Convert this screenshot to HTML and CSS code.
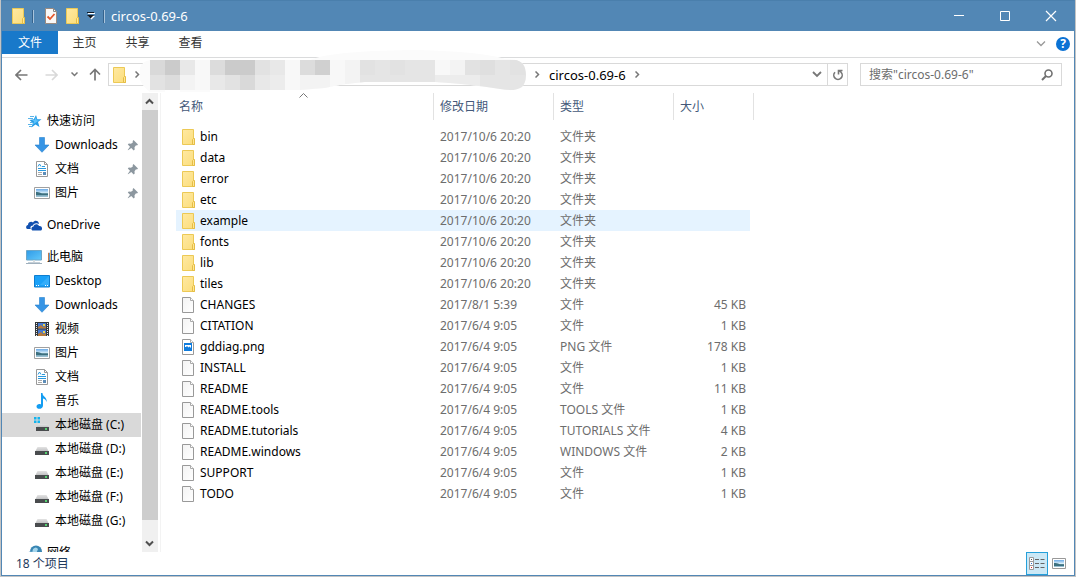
FILE: index.html
```html
<!DOCTYPE html>
<html lang="zh-CN">
<head>
<meta charset="utf-8">
<title>circos-0.69-6</title>
<link rel="stylesheet" href="styles.css">
</head>
<body>
<svg class="defs" aria-hidden="true">
  <defs>
    <linearGradient id="gFolder" x1="0" y1="0" x2="1" y2="1"><stop offset="0" stop-color="#ffe9a2"/><stop offset="1" stop-color="#fbdd7b"/></linearGradient>
    <linearGradient id="gBlue" x1="0" y1="0" x2="1" y2="1"><stop offset="0" stop-color="#2f9be8"/><stop offset="1" stop-color="#62c8fa"/></linearGradient>
    <linearGradient id="gSky" x1="0" y1="0" x2="0" y2="1"><stop offset="0" stop-color="#6aa9e6"/><stop offset=".5" stop-color="#d9effa"/><stop offset=".6" stop-color="#5d8f9b"/><stop offset="1" stop-color="#a3c8dc"/></linearGradient>
    <linearGradient id="gDisk" x1="0" y1="0" x2="0" y2="1"><stop offset="0" stop-color="#e3e3e3"/><stop offset="1" stop-color="#b9babc"/></linearGradient>
    <linearGradient id="gPage" x1="0" y1="0" x2="1" y2="1"><stop offset="0" stop-color="#f3f3f3"/><stop offset="1" stop-color="#ffffff"/></linearGradient>
    <symbol id="folder" viewBox="0 0 16 18"><path d="M1.500 1.500h11v10h1v5h-12z" fill="url(#gFolder)" stroke="#ecc955"/><path d="M11.500 16.500v-5l1-1h1v6z" fill="#ffe694" stroke="#e5bd45"/></symbol>
    <symbol id="file" viewBox="0 0 16 18"><path d="M1.500 1.500h8l3 3v12h-11z" fill="url(#gPage)" stroke="#999"/><path d="M9.500 1.500v3h3" fill="#fff" stroke="#aaa"/></symbol>
    <symbol id="png" viewBox="0 0 16 18"><path d="M1.500 1.500h8l3 3v12h-11z" fill="#fff" stroke="#999"/><path d="M9.500 1.500v3h3" fill="#fff" stroke="#aaa"/><path d="M3 5h8v8H3z" fill="#0f7cdd"/><path d="M4 7h6v3L8.500 8.500l-1 1L6 8 5 9H4z" fill="#fff"/></symbol>
    <symbol id="star" viewBox="0 0 16 16"><path d="M10 2l1.300 4.300H15.500L12 9l1.500 5-4-2.500L5.500 14.500 6.800 10 3.500 7l4.300-.7z" fill="#249ce6"/><path d="M10 4l.7 3.300L13 7.500 10 9.500l-3 2 1-3-2-1.200 2.500-.3z" fill="#5bc2fb"/><path d="M4 3.500h4M2 5.500h5M4 9.500h3M2 11.500h4M3 13.500h3" stroke="#58b4ea"/></symbol>
    <symbol id="down" viewBox="0 0 16 16"><path d="M5.500.5h5v7.500H15L8 15.300 1 8h4.500z" fill="#3795e5" stroke="#2582ce" stroke-width=".6"/></symbol>
    <symbol id="doc" viewBox="0 0 16 16"><path d="M2.500.5h8l3 3v12h-11z" fill="#fff" stroke="#999"/><path d="M10.500.5v3h3" fill="none" stroke="#999"/><path d="M4 5.500L5.500 3 7 5.500M8 5.500h3M4 7.500h8M4 9.500h8" fill="none" stroke="#2b9ade"/><path d="M4 11.500h4M4 13.500h4" stroke="#aaa"/><path d="M9 11h3v3H9z" fill="#5d8db8"/></symbol>
    <symbol id="pic" viewBox="0 0 16 16"><path d="M.5 2.500h15v11H.5z" fill="#fff" stroke="#a0a0a0"/><path d="M2 4h12v8H2z" fill="url(#gSky)"/><path d="M2 7q3-.5 6 1.500h6V10H2z" fill="#3c7080"/></symbol>
    <symbol id="cloud" viewBox="0 0 16 16"><path d="M1.500 12C-.5 12-.3 8 2 8c0-3 3.500-4 5-2.500C8.500 2.500 13 3.500 13 7c-3-2-6 0-6 1.500-3 0-3 3-2 3.500z" fill="#1150b0"/><path d="M7 13.500c-2 0-2.300-3.700.5-4 .5-3 4.500-3 5.500-.5C16 8.500 17 12 15 13.500z" fill="#1150b0"/></symbol>
    <symbol id="pc" viewBox="0 0 16 16"><path d="M.5 1.500h15v9.500H.5z" fill="url(#gBlue)" stroke="#6ba6c8"/><path d="M7 11h2v2H7z" fill="#d5dbde"/><path d="M2 13.500h12" stroke="#c5d0d8"/><path d="M0 14.500h16" stroke="#9fb0bd"/></symbol>
    <symbol id="desk" viewBox="0 0 16 16"><path d="M.5 2.500h15v11.500H.5z" fill="#1aa1f8" stroke="#0e7ed0"/><path d="M6 12L15 3v9z" fill="#33adfa"/><path d="M2 12.500h12" stroke="#fff" stroke-dasharray="1 1 1 6 1 1"/></symbol>
    <symbol id="film" viewBox="0 0 16 16"><path d="M1 1h14v14H1z" fill="#34383c"/><path d="M4 2h8v5.500H4zM4 8.500h8V15H4z" fill="#4779d0"/><path d="M4 6l3-2 2 2 3-1v2.500H4zM4 13l3-2 2 2 3-1v3H4z" fill="#b57a3c"/><path d="M9 3h2v2H9zM9 10h2v2H9z" fill="#ecd34b"/><path d="M2.500 2v13M13.500 2v13" stroke="#eee" stroke-dasharray="1 1"/></symbol>
    <symbol id="music" viewBox="0 0 16 16"><path d="M7 0h1.500c0 4 5 4 4 9-.7-3-2.500-3.500-3.500-3.500v7c0 4-6.500 4.500-6.500 1 0-2 2.500-3 4.500-2z" fill="#139df2"/></symbol>
    <symbol id="disk" viewBox="0 0 16 16"><path d="M3.500 6h9L15 11H1z" fill="url(#gDisk)"/><path d="M1 10h14v4H1z" fill="#494c4e"/><path d="M11 11h2v2h-2z" fill="#54d070"/></symbol>
    <symbol id="diskc" viewBox="0 0 16 16"><path d="M4.500 7h8.500l2.500 4H2z" fill="url(#gDisk)"/><path d="M2 10h13v4H2z" fill="#494c4e"/><path d="M11 11h2v2h-2z" fill="#54d070"/><path d="M0 0h2.500v2.500H0zM3.500 0H6v2.500H3.500zM0 3.500h2.500V6H0zM3.500 3.500H6V6H3.500z" fill="#12b4ee"/></symbol>
    <symbol id="net" viewBox="0 0 16 16"><circle cx="10" cy="6.500" r="6" fill="#3986b3"/><path d="M7 4q3-3 5 0l-2 5-4-1z" fill="#a5d5eb"/><path d="M0 8l5-2 4 3v6H0z" fill="#6aa6c7"/></symbol>
    <symbol id="pin" viewBox="0 0 12 12"><path d="M6.500 1L11 5.500 10 6.500l-1-.3-1.500 2 .2 2.300-1 1L4.300 9 1 11.300.7 11 3 7.700.8 5.500l1-1 2.200.2 2-1.500-.4-1z" fill="#8c979f"/></symbol>
  </defs>
</svg>
<main class="window">
  <header class="titlebar">
    <svg class="ic tall"><use href="#folder"/></svg>
    <span class="bar"></span>
    <button class="plain quick" aria-label="属性"><svg width="14" height="17" viewBox="0 0 14 17"><path d="M1.500.5h8l3 3v12h-11z" fill="#f8f8f8" stroke="#9b8b80"/><path d="M9.500.5v3h3" fill="none" stroke="#888"/><path d="M3.500 8.500l2.500 2.500L10.500 6" fill="none" stroke="#e3572b" stroke-width="1.800"/></svg></button>
    <button class="plain quick" aria-label="新建文件夹"><svg class="ic tall"><use href="#folder"/></svg></button>
    <button class="plain more" aria-label="自定义"><svg width="8" height="8" viewBox="0 0 8 8"><path d="M0 .5h7" stroke="#101c28"/><path d="M1 1.500h7" stroke="#fff"/><path d="M1 4h7L4.500 7.500z" fill="#fff"/><path d="M0 3h7L3.500 6.500z" fill="#101820"/></svg></button>
    <span class="bar"></span>
    <h1>circos-0.69-6</h1>
    <div class="controls">
      <button class="plain" aria-label="最小化"><svg width="12" height="12"><path d="M1 5.500h10" stroke="#fff"/></svg></button>
      <button class="plain" aria-label="最大化"><svg width="12" height="12"><path d="M1.500 1.500h9v9h-9z" fill="none" stroke="#fff"/></svg></button>
      <button class="plain" aria-label="关闭"><svg width="12" height="12"><path d="M1 1l10 10M11 1L1 11" stroke="#fff" stroke-width="1.200"/></svg></button>
    </div>
  </header>
  <nav class="ribbon">
    <button class="plain tab file-tab">文件</button>
    <button class="plain tab">主页</button>
    <button class="plain tab">共享</button>
    <button class="plain tab">查看</button>
    <div class="ribbon-end">
      <button class="plain" aria-label="展开功能区"><svg width="10" height="6"><path d="M1 .5l4 4 4-4" fill="none" stroke="#999" stroke-width="1.300"/></svg></button>
      <button class="plain help" aria-label="帮助">?</button>
    </div>
  </nav>
  <div class="toolbar">
    <button class="plain arrow" aria-label="后退"><svg width="13" height="12"><path d="M12.500 6H1.500M6 1L1 6l5 5" fill="none" stroke="#777" stroke-width="1.700"/></svg></button>
    <button class="plain arrow fwd" aria-label="前进"><svg width="13" height="12"><path d="M.5 6h11M7 1l5 5-5 5" fill="none" stroke="#d9d9d9" stroke-width="1.700"/></svg></button>
    <button class="plain recent" aria-label="最近"><svg width="7" height="5"><path d="M.5.5l3 3 3-3" fill="none" stroke="#777" stroke-width="1.500"/></svg></button>
    <button class="plain up" aria-label="上移"><svg width="12" height="13"><path d="M6 12.500V1.500M1 6.500L6 1.500l5 5" fill="none" stroke="#777" stroke-width="1.700"/></svg></button>
    <div class="address">
      <svg class="ic tall"><use href="#folder"/></svg>
      <svg class="sep" width="5" height="7"><path d="M.5.5l3 3-3 3" fill="none" stroke="#777" stroke-width="1.500"/></svg>
      <div class="crumbs">
        <svg width="5" height="7"><path d="M.5.5l3 3-3 3" fill="none" stroke="#777" stroke-width="1.500"/></svg>
        <a class="crumb" href="#">circos-0.69-6</a>
        <svg width="5" height="7"><path d="M.5.5l3 3-3 3" fill="none" stroke="#777" stroke-width="1.500"/></svg>
      </div>
      <button class="plain drop" aria-label="历史"><svg width="10" height="7"><path d="M1 1l4 4 4-4" fill="none" stroke="#777" stroke-width="1.800"/></svg></button>
      <button class="plain refresh" aria-label="刷新"><svg width="12" height="12"><path d="M3 3.200a4.200 4.200 0 1 0 6 0L7 1.500M6.500 5.500v-4h4" fill="none" stroke="#777" stroke-width="1.600"/></svg></button>
      <svg class="mosaic" width="386" height="44" viewBox="140 49 386 44" shape-rendering="crispEdges" aria-hidden="true">
        <clipPath id="blob"><path d="M150 60h376v30H150z"/></clipPath>
        <clipPath id="edge"><path d="M140 60h10l160 0Q330 51 410 50Q480 51 505 59Q522 58 525 68Q528 80 522 87Q515 92 500 89Q470 84 435 82H365Q340 84 325 88L300 90H210V92H180V90H165V92H150Q139 84 139 74Q139 62 150 60z"/></clipPath>
        <g clip-path="url(#edge)">
          <path d="M138 49h390v46H138z" fill="#fbfbfb"/>
          <g clip-path="url(#blob)">
          <path fill="#d9d9d9" d="M150 60h15v15h-15zM240 75h15v15h-15z"/>
          <path fill="#cbcbcb" d="M165 60h15v15h-15zM225 60h30v15h-30z"/>
          <path fill="#e8e8e8" d="M180 60h15v15h-15zM210 75h15v15h-15zM270 60h15v15h-15zM255 75h15v15h-15z"/>
          <path fill="#f8f8f8" d="M195 60h15v30h-15zM285 60h15v30h-15zM330 60h15v30h-15zM435 60h15v15h-15z"/>
          <path fill="#dcdcdc" d="M210 60h15v15h-15zM165 75h15v15h-15zM300 60h15v15h-15z"/>
          <path fill="#e2e2e2" d="M150 75h15v15h-15zM225 75h15v15h-15zM255 60h15v15h-15zM360 60h15v15h-15zM390 60h15v15h-15zM465 60h15v15h-15zM510 60h16v15h-16z"/>
          <path fill="#d0d0d0" d="M315 60h15v15h-15z"/>
          <path fill="#f3f3f3" d="M180 75h15v15h-15zM300 75h30v15h-30zM345 60h15v30h-15zM450 60h15v15h-15z"/>
          <path fill="#ececec" d="M270 75h15v15h-15zM435 75h45v15h-45z"/>
          <path fill="#e5e5e5" d="M360 75h75v15h-75zM375 60h15v15h-15zM405 60h30v15h-30zM480 75h46v15h-46zM495 60h15v15h-15z"/>
          <path fill="#dfdfdf" d="M480 60h15v15h-15z"/>
          </g>
        </g>
      </svg>
    </div>
    <label class="search"><input type="text" placeholder="搜索&quot;circos-0.69-6&quot;" aria-label="搜索"><svg width="12" height="12"><circle cx="7.500" cy="4.500" r="3.500" fill="none" stroke="#707070" stroke-width="1.600"/><path d="M5 7L1 11" stroke="#707070" stroke-width="2"/></svg></label>
  </div>
  <div class="body">
    <nav class="sidebar">
      <ul class="tree">
        <li><a class="node top" href="#"><svg class="ic"><use href="#star"/></svg>快速访问</a></li>
        <li><a class="node" href="#"><svg class="ic"><use href="#down"/></svg>Downloads<svg class="pin"><use href="#pin"/></svg></a></li>
        <li><a class="node" href="#"><svg class="ic"><use href="#doc"/></svg>文档<svg class="pin"><use href="#pin"/></svg></a></li>
        <li><a class="node" href="#"><svg class="ic"><use href="#pic"/></svg>图片<svg class="pin"><use href="#pin"/></svg></a></li>
      </ul>
      <ul class="tree">
        <li><a class="node top" href="#"><svg class="ic"><use href="#cloud"/></svg>OneDrive</a></li>
      </ul>
      <ul class="tree">
        <li><a class="node top" href="#"><svg class="ic"><use href="#pc"/></svg>此电脑</a></li>
        <li><a class="node" href="#"><svg class="ic"><use href="#desk"/></svg>Desktop</a></li>
        <li><a class="node" href="#"><svg class="ic"><use href="#down"/></svg>Downloads</a></li>
        <li><a class="node" href="#"><svg class="ic"><use href="#film"/></svg>视频</a></li>
        <li><a class="node" href="#"><svg class="ic"><use href="#pic"/></svg>图片</a></li>
        <li><a class="node" href="#"><svg class="ic"><use href="#doc"/></svg>文档</a></li>
        <li><a class="node" href="#"><svg class="ic"><use href="#music"/></svg>音乐</a></li>
        <li><a class="node selected" href="#"><svg class="ic"><use href="#diskc"/></svg>本地磁盘 (C:)</a></li>
        <li><a class="node" href="#"><svg class="ic"><use href="#disk"/></svg>本地磁盘 (D:)</a></li>
        <li><a class="node" href="#"><svg class="ic"><use href="#disk"/></svg>本地磁盘 (E:)</a></li>
        <li><a class="node" href="#"><svg class="ic"><use href="#disk"/></svg>本地磁盘 (F:)</a></li>
        <li><a class="node" href="#"><svg class="ic"><use href="#disk"/></svg>本地磁盘 (G:)</a></li>
      </ul>
      <ul class="tree">
        <li><a class="node top" href="#"><svg class="ic"><use href="#net"/></svg>网络</a></li>
      </ul>
    </nav>
    <div class="scroll">
      <button class="plain" aria-label="向上滚动"><svg width="10" height="7"><path d="M1 5.500l3.500-3.500L8 5.500" fill="none" stroke="#505050" stroke-width="2"/></svg></button>
      <div class="thumb"></div>
      <button class="plain" aria-label="向下滚动"><svg width="10" height="7"><path d="M1 1.500L4.500 5 8 1.500" fill="none" stroke="#505050" stroke-width="2"/></svg></button>
    </div>
    <section class="files">
      <table>
        <colgroup><col class="c-name"><col class="c-date"><col class="c-type"><col class="c-size"></colgroup>
        <thead><tr><th>名称<svg class="sort" width="9" height="5"><path d="M.5 4.500l4-4 4 4" fill="none" stroke="#777"/></svg></th><th>修改日期</th><th>类型</th><th>大小</th></tr></thead>
        <tbody>
          <tr><td><span class="name"><svg class="ic tall"><use href="#folder"/></svg>bin</span></td><td>2017/10/6 20:20</td><td>文件夹</td><td></td></tr>
          <tr><td><span class="name"><svg class="ic tall"><use href="#folder"/></svg>data</span></td><td>2017/10/6 20:20</td><td>文件夹</td><td></td></tr>
          <tr><td><span class="name"><svg class="ic tall"><use href="#folder"/></svg>error</span></td><td>2017/10/6 20:20</td><td>文件夹</td><td></td></tr>
          <tr><td><span class="name"><svg class="ic tall"><use href="#folder"/></svg>etc</span></td><td>2017/10/6 20:20</td><td>文件夹</td><td></td></tr>
          <tr class="hover"><td><span class="name"><svg class="ic tall"><use href="#folder"/></svg>example</span></td><td>2017/10/6 20:20</td><td>文件夹</td><td></td></tr>
          <tr><td><span class="name"><svg class="ic tall"><use href="#folder"/></svg>fonts</span></td><td>2017/10/6 20:20</td><td>文件夹</td><td></td></tr>
          <tr><td><span class="name"><svg class="ic tall"><use href="#folder"/></svg>lib</span></td><td>2017/10/6 20:20</td><td>文件夹</td><td></td></tr>
          <tr><td><span class="name"><svg class="ic tall"><use href="#folder"/></svg>tiles</span></td><td>2017/10/6 20:20</td><td>文件夹</td><td></td></tr>
          <tr><td><span class="name"><svg class="ic tall"><use href="#file"/></svg>CHANGES</span></td><td>2017/8/1 5:39</td><td>文件</td><td>45 KB</td></tr>
          <tr><td><span class="name"><svg class="ic tall"><use href="#file"/></svg>CITATION</span></td><td>2017/6/4 9:05</td><td>文件</td><td>1 KB</td></tr>
          <tr><td><span class="name"><svg class="ic tall"><use href="#png"/></svg>gddiag.png</span></td><td>2017/6/4 9:05</td><td>PNG 文件</td><td>178 KB</td></tr>
          <tr><td><span class="name"><svg class="ic tall"><use href="#file"/></svg>INSTALL</span></td><td>2017/6/4 9:05</td><td>文件</td><td>1 KB</td></tr>
          <tr><td><span class="name"><svg class="ic tall"><use href="#file"/></svg>README</span></td><td>2017/6/4 9:05</td><td>文件</td><td>11 KB</td></tr>
          <tr><td><span class="name"><svg class="ic tall"><use href="#file"/></svg>README.tools</span></td><td>2017/6/4 9:05</td><td>TOOLS 文件</td><td>1 KB</td></tr>
          <tr><td><span class="name"><svg class="ic tall"><use href="#file"/></svg>README.tutorials</span></td><td>2017/6/4 9:05</td><td>TUTORIALS 文件</td><td>4 KB</td></tr>
          <tr><td><span class="name"><svg class="ic tall"><use href="#file"/></svg>README.windows</span></td><td>2017/6/4 9:05</td><td>WINDOWS 文件</td><td>2 KB</td></tr>
          <tr><td><span class="name"><svg class="ic tall"><use href="#file"/></svg>SUPPORT</span></td><td>2017/6/4 9:05</td><td>文件</td><td>1 KB</td></tr>
          <tr><td><span class="name"><svg class="ic tall"><use href="#file"/></svg>TODO</span></td><td>2017/6/4 9:05</td><td>文件</td><td>1 KB</td></tr>
        </tbody>
      </table>
    </section>
  </div>
  <footer class="status">
    <span class="count">18 个项目</span>
    <div class="views">
      <button class="plain view active" aria-label="详细信息"><svg width="16" height="13"><path d="M.5.5h4v12h-4zM.5 4.500h4M.5 8.500h4" fill="#fff" stroke="#9a9a9a"/><path d="M2 2h1v1H2z" fill="#555"/><path d="M2 6h1v1H2z" fill="#2a72d4"/><path d="M2 10h1v1H2z" fill="#d22"/><path d="M6 2.500h4M11.500 2.500h4M6 6.500h4M11.500 6.500h4M6 10.500h4M11.500 10.500h4" stroke="#666"/></svg></button>
      <button class="plain view" aria-label="大图标"><svg width="14" height="11"><path d="M.5.5h13v10H.5z" fill="#fff" stroke="#999"/><path d="M2 2h10v7H2z" fill="url(#gSky)"/><path d="M2 5q4-.5 6 1.500h4V8H2z" fill="#3c7080"/></svg></button>
    </div>
  </footer>
</main>
</body>
</html>
```
FILE: styles.css
```css
* { box-sizing: border-box; }

body {
  margin: 0;
  height: 100vh;
  padding: 0 1px 1px;
  background: #c4c4c4;
  color: #000;
  font-family: "Noto Sans", "Noto Sans CJK SC", sans-serif;
  font-size: 12px;
  line-height: 16px;
}

svg { display: block; flex: none; }
.defs { position: absolute; width: 0; height: 0; }

.plain {
  margin: 0;
  padding: 0;
  border: 0;
  background: none;
  font: inherit;
  color: inherit;
  display: flex;
  align-items: center;
  justify-content: center;
}

a { color: inherit; text-decoration: none; }

.ic { width: 16px; height: 16px; }
.tall { height: 18px; }

.window {
  height: 100%;
  display: flex;
  flex-direction: column;
  background: #fff;
  border: 1px solid #5287b5;
  border-top-color: #4a7fac;
}

/* Title bar */
.titlebar {
  height: 30px;
  flex: none;
  display: flex;
  align-items: center;
  padding-left: 9px;
  background: #5287b5;
  color: #fff;
}
.bar {
  width: 2px;
  height: 13px;
  margin-left: 5px;
  background: #35638d;
  border-right: 1px solid #a9c4dc;
}
.quick { margin-left: 7px; }
.quick:first-of-type { margin-left: 10px; }
.more { margin-left: 6px; }
.titlebar h1 {
  margin: 0 0 0 6px;
  font-size: 13px;
  font-weight: 400;
}
.more + .bar { margin-left: 8px; }
.controls {
  margin-left: auto;
  display: flex;
  align-self: stretch;
}
.controls button { width: 46px; }

/* Ribbon */
.ribbon {
  height: 27px;
  flex: none;
  display: flex;
  align-items: flex-start;
  border-bottom: 1px solid #dadbdc;
}
.tab {
  width: 53px;
  height: 24px;
  color: #333;
}
.file-tab {
  width: 56px;
  height: 23px;
  background: #1979ca;
  color: #fff;
}
.ribbon-end {
  margin-left: auto;
  height: 26px;
  display: flex;
  align-items: center;
  gap: 10px;
  padding-right: 4px;
}
.help {
  width: 14px;
  height: 14px;
  border-radius: 50%;
  background: #0b72d4;
  color: #fff;
  font-weight: 700;
}

/* Navigation and address */
.toolbar {
  height: 35px;
  flex: none;
  display: flex;
  align-items: center;
  padding: 0 12px 2px 13px;
}
.fwd { margin-left: 17px; }
.recent { margin-left: 13px; }
.up { margin-left: 11px; }
.address {
  position: relative;
  flex: 1;
  height: 23px;
  margin-left: 7px;
  display: flex;
  align-items: center;
  padding-left: 3px;
  border: 1px solid #d9d9d9;
}
.sep { margin-left: 7px; }
.crumbs {
  flex: 1;
  display: flex;
  align-items: center;
  gap: 9px;
  padding-left: 395px;
  font-size: 13px;
}
.drop { width: 20px; }
.refresh {
  width: 20px;
  height: 21px;
  border-left: 1px solid #d9d9d9;
}
.mosaic {
  position: absolute;
  left: 31px;
  top: -15px;
}
.search {
  width: 202px;
  height: 23px;
  margin-left: 12px;
  display: flex;
  align-items: center;
  padding: 0 8px;
  border: 1px solid #d9d9d9;
}
.search input {
  flex: 1;
  min-width: 0;
  padding: 0;
  border: 0;
  outline: 0;
  background: none;
  font: inherit;
}
.search input::placeholder { color: #6d6d6d; opacity: 1; }

/* Main area */
.body {
  flex: 1;
  min-height: 0;
  display: flex;
}
.sidebar {
  width: 139px;
  padding-top: 16px;
  overflow: hidden;
}
.tree {
  margin: 0 0 8px;
  padding: 0;
  list-style: none;
}
.node {
  height: 24px;
  display: flex;
  align-items: center;
  gap: 5px;
  padding: 0 2px 0 32px;
  white-space: nowrap;
}
.node.top { padding-left: 24px; }
.node.selected { background: #d9d9d9; }
.pin {
  width: 12px;
  height: 12px;
  margin-left: auto;
}
.scroll {
  width: 16px;
  margin-left: 1px;
  display: flex;
  flex-direction: column;
  background: #f0f0f0;
}
.scroll button { height: 17px; }
.thumb {
  flex: 1;
  margin-bottom: 15px;
  background: #cdcdcd;
}

/* File list */
.files {
  flex: 1;
  min-width: 0;
  margin-left: 2px;
  padding-left: 15px;
  border-left: 1px solid #f3f3f3;
  overflow: hidden;
}
table {
  width: 578px;
  table-layout: fixed;
  border-collapse: separate;
  border-spacing: 0;
}
.c-name { width: 258px; }
.c-date { width: 120px; }
.c-type { width: 120px; }
.c-size { width: 80px; }
th {
  position: relative;
  height: 27px;
  padding: 0 0 0 6px;
  border-right: 1px solid #e2e2e2;
  color: #44597a;
  font-weight: 400;
  text-align: left;
}
th:first-child { padding-left: 3px; }
.sort {
  position: absolute;
  top: 0;
  left: 50%;
  margin-left: -6px;
}
tbody::before {
  content: "";
  display: table-row;
  height: 6px;
}
td {
  height: 21px;
  padding: 0 0 0 6px;
  color: #6d6d6d;
  white-space: nowrap;
}
td:first-child { padding-left: 5px; color: #000; }
td:last-child {
  padding: 0 4px 0 0;
  border-right: 4px solid transparent;
  background-clip: padding-box;
  text-align: right;
}
.name {
  display: flex;
  align-items: center;
  gap: 3px;
}
.hover td { background-color: #e5f3ff; }

/* Status bar */
.status {
  height: 23px;
  flex: none;
  display: flex;
  align-items: center;
  color: #1e395b;
}
.count { padding-left: 14px; }
.views {
  margin-left: auto;
  display: flex;
  padding-right: 4px;
}
.view {
  width: 22px;
  height: 23px;
}
.view.active {
  border: 1px solid #26a0da;
  background: #cbe8f6;
}
```
